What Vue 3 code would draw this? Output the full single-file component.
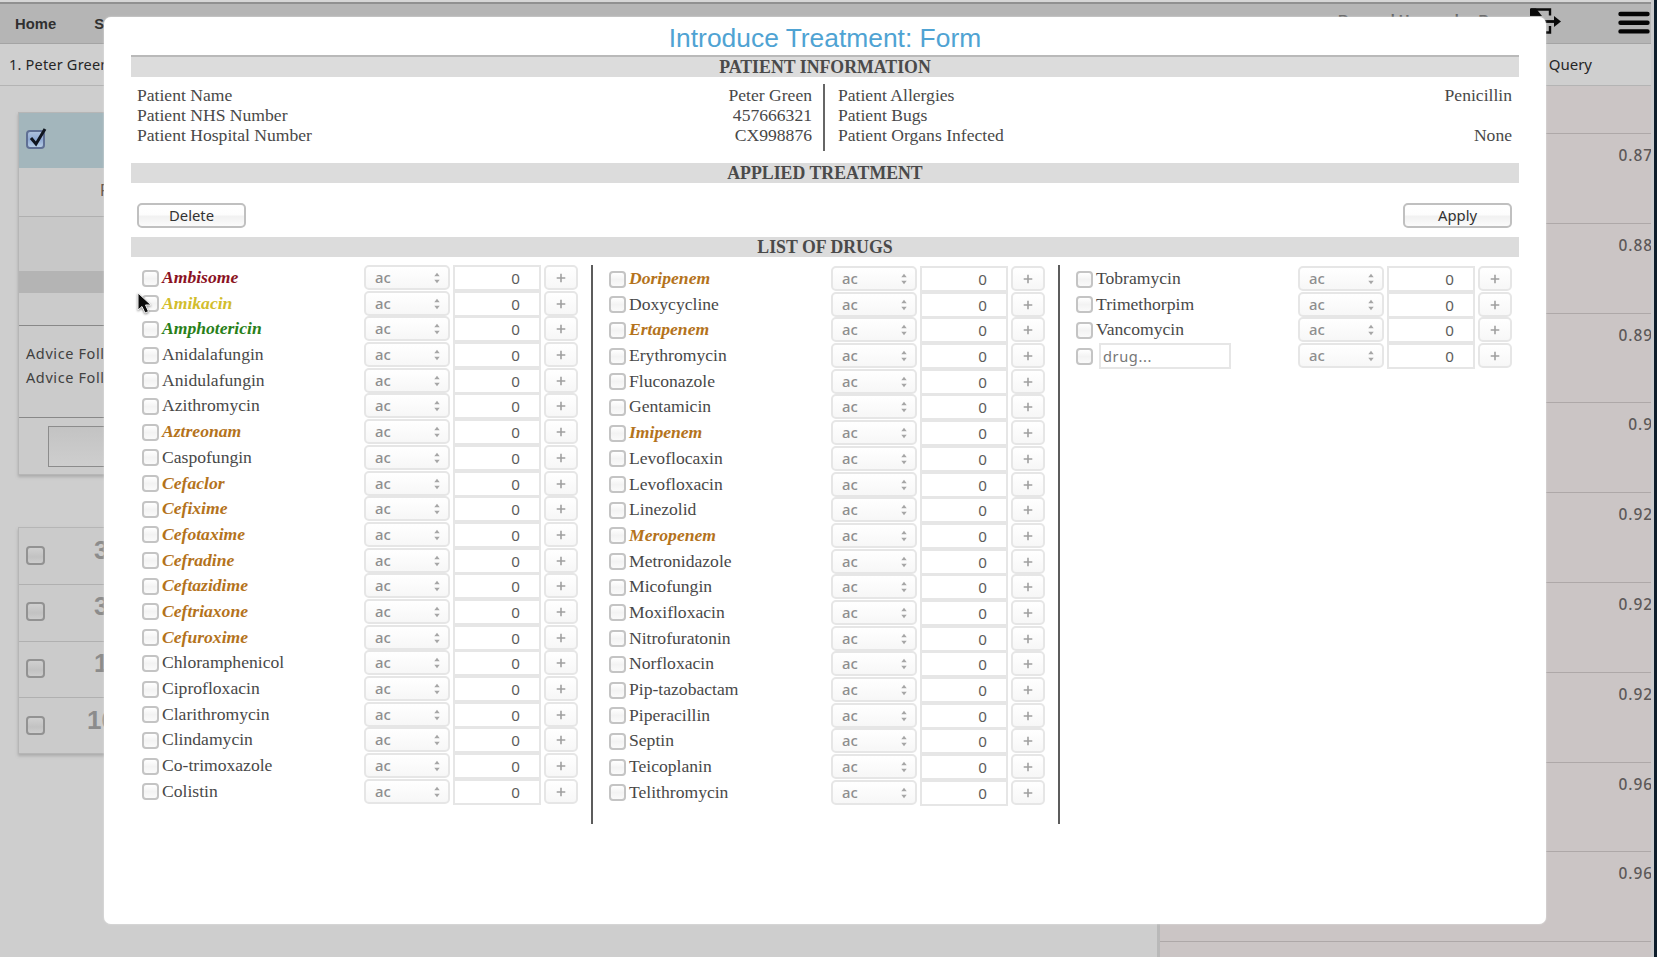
<script setup>
const rowsOf = (text) => text.split(' ').map((entry) => {
  const [name, tone] = entry.split(':')
  return { name, tone: tone || 'plain' }
})

const columns = [
  rowsOf('Ambisome:red Amikacin:yellow Amphotericin:green Anidalafungin Anidulafungin Azithromycin Aztreonam:amber Caspofungin Cefaclor:amber Cefixime:amber Cefotaxime:amber Cefradine:amber Ceftazidime:amber Ceftriaxone:amber Cefuroxime:amber Chloramphenicol Ciprofloxacin Clarithromycin Clindamycin Co-trimoxazole Colistin'),
  rowsOf('Doripenem:amber Doxycycline Ertapenem:amber Erythromycin Fluconazole Gentamicin Imipenem:amber Levoflocaxin Levofloxacin Linezolid Meropenem:amber Metronidazole Micofungin Moxifloxacin Nitrofuratonin Norfloxacin Pip-tazobactam Piperacillin Septin Teicoplanin Telithromycin'),
  [...rowsOf('Tobramycin Trimethorpim Vancomycin'), { name: '', tone: 'plain', custom: true }],
]

const leftInfo = [
  ['Patient Name', 'Peter Green'],
  ['Patient NHS Number', '457666321'],
  ['Patient Hospital Number', 'CX998876'],
]
const rightInfo = [
  ['Patient Allergies', 'Penicillin'],
  ['Patient Bugs', ''],
  ['Patient Organs Infected', 'None'],
]
const scores = ['0.87', '0.88', '0.89', '0.9', '0.92', '0.92', '0.92', '0.96', '0.96', '']
const others = ['34', '34', '14', '10']
</script>

<template>
  <div class="screen">
    <header class="topbar">
      <span class="nav-home">Home</span>
      <span class="nav-next">S</span>
      <span class="user">Bernard Hernandez Perez</span>
      <svg class="logout" width="34" height="30" viewBox="0 0 34 30">
        <path d="M3 8V2.500h18v6M21 19v6.500h-5" fill="none" stroke="#0a0a0a" stroke-width="2.400" />
        <path d="M1 1.500h6l6 7.500H1z" fill="#0a0a0a" />
        <path d="M15 14.500h12" stroke="#0a0a0a" stroke-width="2.800" />
        <path d="M25 9l7 5.500-7 5.500z" fill="#0a0a0a" />
      </svg>
      <svg class="burger" width="32" height="24" viewBox="0 0 32 24">
        <path d="M2.500 3h27M2.500 11.700h27M2.500 20.400h27" stroke="#050505" stroke-width="4.400" stroke-linecap="round" />
      </svg>
    </header>
    <div class="subbar"><span>1. Peter Green</span><span class="query">Query</span></div>
    <main class="body">
      <section class="left">
        <div class="card">
          <div class="card-head"><span class="bigbox checked">
            <svg width="24" height="24" viewBox="0 0 24 24"><path d="M6 11l5 6L20 2" fill="none" stroke="#10151f" stroke-width="3" /></svg>
          </span></div>
          <div class="card-line">F</div>
          <div class="card-gap"></div>
          <div class="card-band"></div>
          <div class="card-gap2"></div>
          <div class="advice"><div>Advice Followed</div><div>Advice Followed</div></div>
          <div class="card-foot"><div class="foot-btn"></div></div>
        </div>
        <div class="card list">
          <div v-for="(o, i) in others" :key="i" class="list-row">
            <span class="bigbox"></span><span class="num" :class="{ wide: o === '10' }">{{ o }}</span>
          </div>
        </div>
      </section>
      <section class="right">
        <div v-for="(s, i) in scores" :key="i" class="score">{{ s }}</div>
      </section>
    </main>
    <div class="edge"></div>

    <div class="modal">
      <h1>Introduce Treatment: Form</h1>
      <h2>PATIENT INFORMATION</h2>
      <div class="info">
        <div class="info-col">
          <div v-for="r in leftInfo" :key="r[0]" class="info-row"><span>{{ r[0] }}</span><span>{{ r[1] }}</span></div>
        </div>
        <div class="info-col second">
          <div v-for="r in rightInfo" :key="r[0]" class="info-row"><span>{{ r[0] }}</span><span>{{ r[1] }}</span></div>
        </div>
      </div>
      <h2>APPLIED TREATMENT</h2>
      <div class="actions"><button class="btn">Delete</button><button class="btn">Apply</button></div>
      <h2>LIST OF DRUGS</h2>
      <div class="drugs">
        <div v-for="(col, c) in columns" :key="c" class="drug-col">
          <div v-for="(d, i) in col" :key="i" class="drug">
            <span class="box"></span>
            <span v-if="d.custom" class="custom">drug...</span>
            <span v-else class="name" :class="d.tone">{{ d.name }}</span>
            <span class="select">ac
              <svg width="6" height="12" viewBox="0 0 6 12"><path d="M.3 4.300L3 .8l2.700 3.500zM.3 7.700L3 11.200l2.700-3.500z" fill="#a6a6a6" /></svg>
            </span>
            <span class="number">0</span>
            <span class="plus"><svg width="10" height="10" viewBox="0 0 10 10"><path d="M5 .7v8.600M.7 5h8.600" stroke="#a0a0a0" stroke-width="1.600" /></svg></span>
          </div>
        </div>
      </div>
    </div>

    <svg class="cursor" width="18" height="24" viewBox="0 0 18 24">
      <path d="M2 1v17l4-3.500 3 6.500 3.500-1.500-3-6.500H15z" fill="#0b0b0b" stroke="#f4f4f4" stroke-width="1" />
    </svg>
  </div>
</template>

<style>
body { background: #cecece; overflow: hidden; }
</style>

<style scoped>
* { box-sizing: border-box; }
.screen { position: relative; width: 1657px; height: 957px; overflow: hidden; background: #cecece; font-family: "Noto Sans", sans-serif; font-size: 14.5px; color: #333; white-space: nowrap; }
.topbar { position: relative; height: 44px; border-top: 2px solid #d6d6d6; border-bottom: 1px solid #a4a4a4; background: #b5b5b5; box-shadow: inset 0 2px 0 #909090; font: bold 14.8px/44px "Liberation Sans", sans-serif; color: #303030; }
.nav-home { margin-left: 15px; }
.nav-next { margin-left: 38px; }
.user { position: absolute; left: 1338px; top: -4px; color: #666; }
.logout { position: absolute; left: 1529px; top: 5px; }
.burger { position: absolute; left: 1618px; top: 9px; }
.subbar { height: 42px; display: flex; justify-content: space-between; padding: 0 65px 0 9px; line-height: 40px; border-bottom: 1px solid #b4b4b4; background: #cfcfcf; color: #262626; }
.subbar span:first-child { letter-spacing: .2px; }
.query { font-size: 15px; }
.body { display: flex; height: 871px; }
.left { width: 1157px; padding: 26px 0 0 18px; }
.card { width: 500px; border: 1px solid #b6b6b6; background: #cbcbcb; box-shadow: 0 2px 3px #aaa; }
.card-head { height: 55px; padding: 17px 0 0 7px; background: #a3b6bc; }
.bigbox { display: inline-block; width: 19px; height: 19px; flex: none; border: 2px solid #929292; border-radius: 4px; background: linear-gradient(#d0d0d0, #c2c2c2 60%, #cdcdcd); }
.bigbox.checked { display: block; position: relative; border-color: #5f6f94; background: linear-gradient(#adc0dc, #8fa9d3 50%, #b4cbe4); }
.bigbox svg { position: absolute; left: -3px; top: -5px; }
.card-line { height: 49px; padding-left: 81px; line-height: 45px; font-size: 15.5px; color: #5c5046; border-bottom: 1px solid #b0b0b0; }
.card-gap { height: 54px; background: #c8c8c8; }
.card-band { height: 22px; background: #b4b4b4; }
.card-gap2 { height: 33px; border-bottom: 1px solid #888; }
.advice { height: 92px; padding: 15px 0 0 7px; line-height: 24.300px; letter-spacing: .6px; border-bottom: 1px solid #888; color: #404040; }
.card-foot { height: 56px; padding: 8px 0 0 29px; }
.foot-btn { width: 300px; height: 41px; border: 1px solid #8c8c8c; background: linear-gradient(#c3c3c3, #cecece); }
.list { margin-top: 52px; }
.list-row { height: 56.800px; padding: 17.500px 0 0 7px; display: flex; border-bottom: 1px solid #b0b0b0; }
.list-row:last-child { height: 55px; border: 0; }
.num { margin: -9px 0 0 49px; font: bold 26px/26px "Liberation Sans", sans-serif; color: #8c8c8c; }
.num.wide { margin-left: 42px; }
.right { width: 494px; margin-left: 3px; box-shadow: -3px 0 0 #b9b9b9; background: #cbc5c5; padding-top: 47px; margin-right: 3px; }
.score { height: 89.800px; padding: 10px 1px 0 0; border-top: 1px solid #aea8a8; text-align: right; font-size: 15.5px; font-weight: 500; line-height: 22px; letter-spacing: .9px; color: #5c5858; }
.edge { position: absolute; right: 0; top: 0; width: 6px; height: 957px; border-left: 3px solid #c9cacc; background: #0d1d2b; }

.modal { position: absolute; left: 104px; top: 17px; width: 1442px; height: 907px; padding: 0 27px 0 27px; border-radius: 7px; background: #fff; box-shadow: 0 0 2px #e8e8e8; font-family: "Liberation Serif", serif; font-size: 17.600px; color: #484848; }
h1 { margin: 0; height: 40px; border-bottom: 2px solid #b9b9b9; font: 26.400px/43px "Liberation Sans", sans-serif; text-align: center; color: #4fa3d3; }
h2 { margin: 0; height: 20px; background: #dcdcdc; font-size: 17.800px; line-height: 21px; text-align: center; color: #4a4a4a; }
.info { display: flex; height: 86px; padding-top: 7px; }
.info-col { width: 692px; height: 67px; padding: .6px 11px 0 6px; }
.info-col.second { width: 695px; border-left: 2px solid #666; padding: .6px 6px 0 13px; }
.info-row { display: flex; justify-content: space-between; height: 20.400px; line-height: 20.400px; }
.actions { display: flex; justify-content: space-between; height: 54px; padding: 20px 7px 0 6px; }
.btn { width: 109px; height: 25px; padding: 0; border: 2px solid #c0c0c0; border-radius: 5px; background: linear-gradient(#fff, #fdfdfd 45%, #f1f1f1 55%, #fbfbfb); font: 14.800px/18px "Noto Sans", sans-serif; color: #333; padding-bottom: 2px; }
.drugs { display: flex; padding-top: 8px; }
.drug-col { width: 467px; height: 559px; padding-left: 16px; border-left: 2px solid #5c5c5c; }
.drug-col:first-child { width: 460px; padding-left: 11px; border: 0; }
.drug-col:nth-child(n+2) { padding-top: 1px; }
.drug-col:last-child { width: 460px; }
.drug { display: flex; height: 25.700px; }
.box { width: 17px; height: 17px; margin: 4.500px 3px 0 0; flex: none; border: 2px solid #c4c4c4; border-radius: 4px; background: linear-gradient(#fff, #f3f3f3 50%, #fafafa); }
.name { width: 202px; line-height: 25.500px; }
.red, .yellow, .green, .amber { font-weight: bold; font-style: italic; }
.red { color: #8b1222; }
.yellow { color: #d2bd2c; }
.green { color: #298019; }
.amber { color: #b4731c; }
.custom { width: 132px; height: 26px; margin: 0 67px 0 3px; padding-left: 2px; border: 2px solid #e6e6e6; font: 14.600px/23px "Noto Sans", sans-serif; letter-spacing: .6px; color: #777; }
.select { display: flex; justify-content: space-between; width: 86px; height: 25px; margin-right: 3px; padding: 3px 8px 0 9px; border: 2px solid #e6e6e6; border-radius: 5px; background: linear-gradient(#fff, #f7f7f7); font: 500 14.800px/15px "Noto Sans", sans-serif; color: #8e8e8e; }
.select svg { margin-top: 2px; }
.number { width: 88px; height: 26px; margin-right: 3px; padding-right: 19px; border: 2px solid #e6e6e6; text-align: right; font: 15.200px/23px "Noto Sans", sans-serif; color: #5c5c5c; }
.plus { display: flex; width: 34px; height: 25px; justify-content: center; align-items: center; padding-top: 1px; border: 2px solid #e6e6e6; border-radius: 5px; background: linear-gradient(#fff, #f7f7f7); }
.cursor { position: absolute; left: 136px; top: 292px; filter: drop-shadow(0 1px 1px #888); }
</style>
